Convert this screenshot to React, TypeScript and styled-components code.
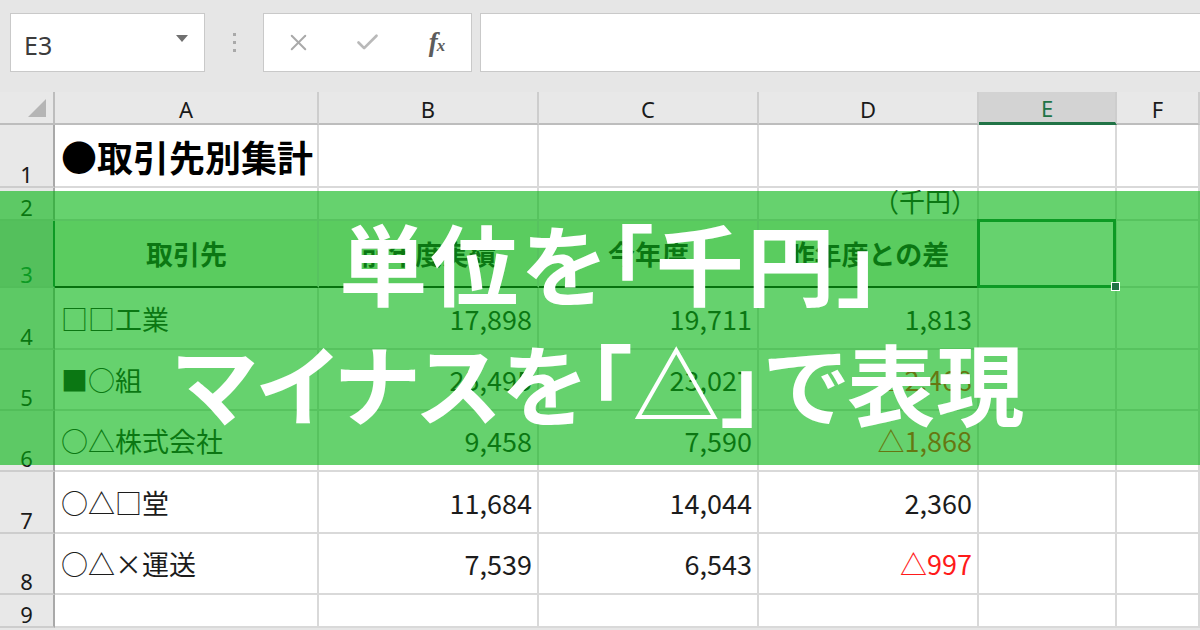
import React from 'react';
import styled, { createGlobalStyle, css } from 'styled-components';
import { X, Check } from 'lucide-react';

const Global = createGlobalStyle`
  html, body { margin: 0; padding: 0; }
  body {
    width: 1200px;
    height: 630px;
    overflow: hidden;
    background: #e6e6e6;
    font-family: "Noto Sans CJK JP", "Noto Sans", sans-serif;
  }
`;

const Page = styled.div`
  position: relative;
  width: 1200px;
  height: 630px;
  overflow: hidden;
  background: #e6e6e6;
`;

const FormulaBar = styled.div`
  height: 92px;
  box-sizing: border-box;
  display: flex;
  align-items: flex-start;
  padding: 13px 0 0 10px;
`;

const Field = styled.div`
  height: 59px;
  box-sizing: border-box;
  background: #fff;
  border: 1px solid #c9c9c9;
  display: flex;
  align-items: center;
`;

const NameBox = styled(Field)`
  width: 195px;
  justify-content: space-between;
  padding: 4px 16px 0 13px;
  font-family: "Noto Sans", "Liberation Sans", sans-serif;
  font-size: 25px;
  color: #3c3c3c;
`;

const Caret = styled.span`
  width: 0;
  height: 0;
  border-left: 6px solid transparent;
  border-right: 6px solid transparent;
  border-top: 7px solid #707070;
  margin-bottom: 12px;
`;

const Grip = styled.div`
  width: 58px;
  height: 59px;
  display: flex;
  flex-direction: column;
  align-items: center;
  justify-content: center;
  gap: 5px;
`;

const GripDot = styled.span`
  width: 3px;
  height: 3px;
  background: #a9a9a9;
`;

const FxBox = styled(Field)`
  width: 209px;
`;

const FxSlot = styled.div`
  width: 70px;
  display: flex;
  justify-content: center;
  align-items: center;
`;

const FxLabel = styled.span`
  font-family: "Liberation Serif", "DejaVu Serif", serif;
  font-style: italic;
  font-weight: 700;
  font-size: 27px;
  color: #5c5c5c;
  letter-spacing: -1px;
  & small {
    font-size: 17px;
  }
`;

const FormulaInput = styled(Field)`
  flex: 1;
  margin-left: 8px;
  border-right: none;
`;

const Sheet = styled.div`
  display: grid;
  grid-template-columns: 55px 264px 220px 220px 220px 138px 1fr;
  grid-template-rows: 33px 63px 33px 67px 62px 61px 61px 62px 61px 33px;
  background: #fff;
`;

const Corner = styled.div`
  background: #e8e8e8;
  border-right: 2px solid #bdbdbd;
  border-bottom: 2px solid #bdbdbd;
  display: flex;
  align-items: flex-end;
  justify-content: flex-end;
  padding: 0 7px 6px 0;
`;

const ColHeader = styled.div<{ $active?: boolean }>`
  box-sizing: border-box;
  background: ${p => (p.$active ? '#d3d3d3' : '#e8e8e8')};
  border-right: 2px solid #cdcdcd;
  border-bottom: ${p => (p.$active ? '3px solid #217346' : '2px solid #bdbdbd')};
  display: flex;
  align-items: center;
  justify-content: center;
  padding-top: 2px;
  font-family: "Noto Sans", "Liberation Sans", sans-serif;
  font-size: 22px;
  color: ${p => (p.$active ? '#217346' : '#1a1a1a')};
`;

const RowHeader = styled.div<{ $active?: boolean }>`
  box-sizing: border-box;
  background: ${p => (p.$active ? '#d3d3d3' : '#e8e8e8')};
  border-right: ${p => (p.$active ? '2px solid #217346' : '2px solid #a9a9a9')};
  border-bottom: 2px solid #cdcdcd;
  display: flex;
  align-items: flex-end;
  justify-content: center;
  padding-bottom: 1px;
  font-family: "Noto Sans", "Liberation Sans", sans-serif;
  font-size: 22px;
  line-height: 1;
  color: ${p => (p.$active ? '#217346' : '#1a1a1a')};
`;

type Align = 'left' | 'right' | 'center';

const Cell = styled.div<{
  $align?: Align;
  $head?: boolean;
  $title?: boolean;
  $red?: boolean;
  $small?: boolean;
  $selected?: boolean;
}>`
  position: relative;
  box-sizing: border-box;
  border-right: 2px solid #d9d9d9;
  border-bottom: 2px solid #d9d9d9;
  display: flex;
  align-items: center;
  justify-content: ${p =>
    p.$align === 'right' ? 'flex-end' : p.$align === 'center' ? 'center' : 'flex-start'};
  padding: 0 5px 0 6px;
  white-space: nowrap;
  font-family: "Noto Sans CJK JP", "Noto Sans", sans-serif;
  font-size: 27px;
  color: ${p => (p.$red ? '#ff1a1a' : '#1c1c1c')};
  ${p =>
    p.$title &&
    css`
      font-size: 36px;
      font-weight: 700;
      color: #000;
    `}
  ${p =>
    p.$small &&
    css`
      font-size: 26px;
      align-items: flex-end;
      padding: 0 0 0 6px;
    `}
  ${p =>
    p.$head &&
    css`
      background: #e2efda;
      border-bottom: 2px solid #111;
      font-weight: 700;
      font-size: 27px;
    `}
  ${p =>
    p.$selected &&
    css`
      &::after {
        content: '';
        position: absolute;
        left: -2px;
        top: -2px;
        right: -1px;
        bottom: -2px;
        border: 3px solid #217346;
      }
      &::before {
        content: '';
        position: absolute;
        right: -5px;
        bottom: -5px;
        width: 7px;
        height: 7px;
        background: #217346;
        border: 1px solid #fff;
        z-index: 1;
      }
    `}
`;

const Band = styled.div`
  position: absolute;
  left: 0;
  top: 191px;
  width: 1200px;
  height: 274px;
  background: rgba(0, 180, 13, 0.6);
  display: flex;
  flex-direction: column;
  align-items: center;
  justify-content: center;
  padding-bottom: 14px;
  box-sizing: border-box;
`;

const Headline = styled.div<{ $spacing: number; $shift: number }>`
  font-family: "Noto Sans CJK JP", sans-serif;
  font-weight: 700;
  font-size: 88px;
  line-height: 120px;
  color: #fff;
  font-feature-settings: "palt";
  letter-spacing: ${p => p.$spacing}px;
  margin-left: ${p => p.$shift}px;
  white-space: nowrap;
`;

type Row = {
  n: number;
  a: string;
  b?: string;
  c?: string;
  d?: string;
  dRed?: boolean;
};

const rows: Row[] = [
  { n: 4, a: '□□工業', b: '17,898', c: '19,711', d: '1,813' },
  { n: 5, a: '■○組', b: '25,495', c: '23,027', d: '△2,468', dRed: true },
  { n: 6, a: '○△株式会社', b: '9,458', c: '7,590', d: '△1,868', dRed: true },
  { n: 7, a: '○△□堂', b: '11,684', c: '14,044', d: '2,360' },
  { n: 8, a: '○△×運送', b: '7,539', c: '6,543', d: '△997', dRed: true },
];

const cols = ['A', 'B', 'C', 'D', 'E', 'F'];

export default function App() {
  return (
    <Page>
      <Global />
      <FormulaBar>
        <NameBox>
          <span>E3</span>
          <Caret />
        </NameBox>
        <Grip>
          <GripDot />
          <GripDot />
          <GripDot />
        </Grip>
        <FxBox>
          <FxSlot>
            <X size={27} strokeWidth={1.8} color="#a9a9a9" />
          </FxSlot>
          <FxSlot>
            <Check size={27} strokeWidth={2.4} color="#b9b9b9" />
          </FxSlot>
          <FxSlot>
            <FxLabel>
              f<small>x</small>
            </FxLabel>
          </FxSlot>
        </FxBox>
        <FormulaInput />
      </FormulaBar>

      <Sheet>
        <Corner>
          <svg width="18" height="18" viewBox="0 0 18 18">
            <polygon points="18,0 18,18 0,18" fill="#b5b5b5" />
          </svg>
        </Corner>
        {cols.map(c => (
          <ColHeader key={c} $active={c === 'E'}>
            {c}
          </ColHeader>
        ))}

        <RowHeader>1</RowHeader>
        <Cell $title>●取引先別集計</Cell>
        <Cell />
        <Cell />
        <Cell />
        <Cell />
        <Cell />

        <RowHeader>2</RowHeader>
        <Cell />
        <Cell />
        <Cell />
        <Cell $align="right" $small>
          （千円）
        </Cell>
        <Cell />
        <Cell />

        <RowHeader $active>3</RowHeader>
        <Cell $head $align="center">
          取引先
        </Cell>
        <Cell $head $align="center">
          前年度実績
        </Cell>
        <Cell $head $align="center">
          今年度
        </Cell>
        <Cell $head $align="center">
          昨年度との差
        </Cell>
        <Cell $selected />
        <Cell />

        {rows.map(r => (
          <React.Fragment key={r.n}>
            <RowHeader>{r.n}</RowHeader>
            <Cell>{r.a}</Cell>
            <Cell $align="right">{r.b}</Cell>
            <Cell $align="right">{r.c}</Cell>
            <Cell $align="right" $red={r.dRed}>
              {r.d}
            </Cell>
            <Cell />
            <Cell />
          </React.Fragment>
        ))}

        <RowHeader>9</RowHeader>
        <Cell />
        <Cell />
        <Cell />
        <Cell />
        <Cell />
        <Cell />
      </Sheet>

      <Band>
        <Headline $spacing={3} $shift={24}>
          単位を「千円」
        </Headline>
        <Headline $spacing={1} $shift={0}>
          マイナスを「△」で表現
        </Headline>
      </Band>
    </Page>
  );
}
